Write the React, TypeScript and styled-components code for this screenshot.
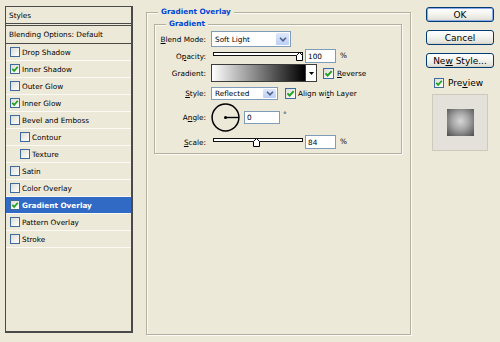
import React from "react";
import styled, { createGlobalStyle } from "styled-components";

const Global = createGlobalStyle`
  html, body { margin: 0; padding: 0; background: #ECE9D8; }
  body { font-family: "DejaVu Sans", Verdana, sans-serif; font-size: 7.3px; color: #000; }
  * { box-sizing: border-box; }
`;

const Dialog = styled.div`
  width: 500px;
  height: 342px;
  display: flex;
  align-items: flex-start;
  padding: 6px 0 0 5px;
  background: #ECE9D8;
  overflow: hidden;
`;

/* ---------- left styles list ---------- */
const StylesPanel = styled.div`
  width: 128px;
  height: 327px;
  border-style: solid;
  border-color: #4a4a4a;
  border-width: 1px 2px 2px 1px;
  display: flex;
  flex-direction: column;
  flex: none;
`;

const PanelHeader = styled.div`
  height: 17px;
  padding-left: 3px;
  display: flex;
  align-items: center;
  border-bottom: 1px solid #4a4a4a;
  margin-bottom: 1px;
`;

const BlendingRow = styled.div`
  height: 19px;
  padding-left: 3px;
  display: flex;
  align-items: center;
  border-top: 1px solid #4a4a4a;
  border-bottom: 1px solid #4a4a4a;
`;

const EffectRow = styled.div<{ $indent?: boolean; $selected?: boolean }>`
  height: 17px;
  display: flex;
  align-items: center;
  gap: 2px;
  padding-left: ${(p) => (p.$indent ? 14 : 4)}px;
  border-bottom: 1px solid #fbfaf4;
  background: ${(p) => (p.$selected ? "#316AC5" : "transparent")};
  color: ${(p) => (p.$selected ? "#fff" : "#000")};
  font-weight: ${(p) => (p.$selected ? "bold" : "normal")};
`;

/* ---------- checkbox ---------- */
const Box = styled.span<{ $size: number }>`
  width: ${(p) => p.$size}px;
  height: ${(p) => p.$size}px;
  border: 1px solid #3f6a9e;
  background: linear-gradient(135deg, #dcdcd4, #ffffff);
  display: inline-flex;
  align-items: center;
  justify-content: center;
  flex: none;
`;

const Check = ({ checked, size = 10 }: { checked?: boolean; size?: number }) => (
  <Box $size={size}>
    {checked && (
      <svg width={size - 2} height={size - 2} viewBox="0 0 8 8">
        <path d="M1.3 3.9 L3.2 5.9 L6.8 1.8" stroke="#21A121" strokeWidth="1.7" fill="none" />
      </svg>
    )}
  </Box>
);

/* ---------- group boxes ---------- */
const GroupBox = styled.div<{ $w: number; $h: number; $pl?: number; $mt?: number }>`
  width: ${(p) => p.$w}px;
  height: ${(p) => p.$h}px;
  margin-top: ${(p) => p.$mt ?? 0}px;
  border: 1px solid #b3b09f;
  box-shadow: inset 1px 1px 0 #fbfaf6, 1px 1px 0 #fbfaf6;
  padding-left: ${(p) => p.$pl ?? 0}px;
  flex: none;
`;

const GroupTitle = styled.div<{ $ml: number }>`
  width: fit-content;
  height: 10px;
  line-height: 10px;
  margin: -6px 0 0 ${(p) => p.$ml}px;
  padding: 0 3px;
  background: #ECE9D8;
  color: #0046D5;
  font-weight: bold;
`;

/* ---------- form rows ---------- */
const FormRow = styled.div<{ $h: number; $mt: number }>`
  display: flex;
  align-items: center;
  height: ${(p) => p.$h}px;
  margin-top: ${(p) => p.$mt}px;
`;

const Label = styled.span`
  width: 51px;
  margin-right: 5px;
  text-align: right;
  flex: none;
  white-space: nowrap;
`;

const U = styled.span`
  text-decoration: underline;
`;

const Select = styled.div<{ $w: number; $h: number }>`
  width: ${(p) => p.$w}px;
  height: ${(p) => p.$h}px;
  border: 1px solid #7F9DB9;
  background: #fff;
  padding: 1px;
  display: flex;
  flex: none;
`;

const SelectText = styled.span`
  flex: 1;
  display: flex;
  align-items: center;
  padding-left: 2px;
`;

const SelectArrow = styled.span`
  width: 13px;
  border-radius: 1px;
  background: linear-gradient(#dfe8fc, #bccff6);
  display: flex;
  align-items: center;
  justify-content: center;
`;

const Dropdown = ({ w, h, value }: { w: number; h: number; value: string }) => (
  <Select $w={w} $h={h}>
    <SelectText>{value}</SelectText>
    <SelectArrow>
      <svg width="8" height="5" viewBox="0 0 8 5">
        <path d="M1 0.8 L4 3.8 L7 0.8" stroke="#4D6185" strokeWidth="1.6" fill="none" />
      </svg>
    </SelectArrow>
  </Select>
);

const SliderWrap = styled.div`
  position: relative;
  width: 92px;
  height: 14px;
  padding: 3px 0 0 2px;
  flex: none;
`;

const Track = styled.div`
  width: 90px;
  height: 4px;
  border: 1px solid #111;
  border-top-width: 1px;
  background: #fff;
`;

const Thumb = styled.svg`
  position: absolute;
  top: 3px;
`;

const Slider = ({ x }: { x: number }) => (
  <SliderWrap>
    <Track />
    <Thumb width="7" height="9" viewBox="0 0 7 9" style={{ left: x }}>
      <polygon points="0.5,8.5 0.5,3.5 3.5,0.5 6.5,3.5 6.5,8.5" fill="#fff" stroke="#000" strokeWidth="1" />
    </Thumb>
  </SliderWrap>
);

const TextBox = styled.input<{ $w: number; $h: number; $ml: number }>`
  width: ${(p) => p.$w}px;
  height: ${(p) => p.$h}px;
  margin: 0 0 0 ${(p) => p.$ml}px;
  border: 1px solid #7F9DB9;
  background: #fff;
  padding: 0 0 0 2px;
  font: inherit;
  color: #000;
  outline: none;
  flex: none;
`;

const Unit = styled.span<{ $ml: number; $raise?: number }>`
  margin-left: ${(p) => p.$ml}px;
  margin-bottom: ${(p) => p.$raise ?? 2}px;
`;

const GradientBar = styled.div`
  width: 95px;
  height: 18px;
  border: 1px solid #3c3c3c;
  background: linear-gradient(to right, #ffffff, #000000);
  flex: none;
`;

const GradientArrow = styled.div`
  width: 11px;
  height: 18px;
  border: 1px solid #3c3c3c;
  border-left: none;
  background: #fff;
  display: flex;
  align-items: center;
  justify-content: center;
  flex: none;
`;

const CheckLabel = styled.span<{ $ml: number; $gap: number }>`
  display: flex;
  align-items: center;
  gap: ${(p) => p.$gap}px;
  margin-left: ${(p) => p.$ml}px;
`;

/* ---------- right column ---------- */
const RightColumn = styled.div`
  width: 68px;
  margin: 1px 0 0 15px;
  display: flex;
  flex-direction: column;
  font-size: 9px;
  flex: none;
`;

const Button = styled.button<{ $default?: boolean; $mt?: number }>`
  width: 68px;
  height: 15px;
  margin-top: ${(p) => p.$mt ?? 0}px;
  padding: 0;
  border: 1px solid #003C74;
  border-radius: 3px;
  background: linear-gradient(#ffffff, #f4f4f0 45%, #e5e4dc 85%, #d4cfc3);
  box-shadow: ${(p) => (p.$default ? "inset 0 0 0 1px #8eaae8" : "none")};
  font: inherit;
  line-height: 12px;
  color: #000;
`;

const PreviewRow = styled.div`
  display: flex;
  align-items: center;
  gap: 4px;
  height: 11px;
  margin-top: 9px;
  padding-left: 8px;
`;

const PreviewBox = styled.div`
  width: 56px;
  height: 57px;
  margin: 6px 0 0 6px;
  border: 1px solid #cdcabd;
  background: #e3e1d9;
  display: flex;
  align-items: center;
  justify-content: center;
`;

const PreviewSwatch = styled.div`
  width: 27px;
  height: 27px;
  background: radial-gradient(circle at 50% 45%, #d6d6d6 0%, #a8a8a8 40%, #6a6a6a 80%, #4a4a4a 100%);
`;

const effects: { label: string; checked?: boolean; indent?: boolean; selected?: boolean }[] = [
  { label: "Drop Shadow" },
  { label: "Inner Shadow", checked: true },
  { label: "Outer Glow" },
  { label: "Inner Glow", checked: true },
  { label: "Bevel and Emboss" },
  { label: "Contour", indent: true },
  { label: "Texture", indent: true },
  { label: "Satin" },
  { label: "Color Overlay" },
  { label: "Gradient Overlay", checked: true, selected: true },
  { label: "Pattern Overlay" },
  { label: "Stroke" },
];

export default function App() {
  return (
    <>
      <Global />
      <Dialog>
        <StylesPanel>
          <PanelHeader>Styles</PanelHeader>
          <BlendingRow>Blending Options: Default</BlendingRow>
          {effects.map((e) => (
            <EffectRow key={e.label} $indent={e.indent} $selected={e.selected}>
              <Check checked={e.checked} />
              <span>{e.label}</span>
            </EffectRow>
          ))}
        </StylesPanel>

        <GroupBox $w={265} $h={323} $pl={7} $mt={6} style={{ marginLeft: 13 }}>
          <GroupTitle $ml={4}>Gradient Overlay</GroupTitle>
          <GroupBox $w={248} $h={130} $mt={7}>
            <GroupTitle $ml={11}>Gradient</GroupTitle>

            <FormRow $h={16} $mt={2}>
              <Label>
                <U>B</U>lend Mode:
              </Label>
              <Dropdown w={80} h={16} value="Soft Light" />
            </FormRow>

            <FormRow $h={14} $mt={2}>
              <Label>
                O<U>p</U>acity:
              </Label>
              <Slider x={85} />
              <TextBox $w={31} $h={14} $ml={2} readOnly value="100" />
              <Unit $ml={4}>%</Unit>
            </FormRow>

            <FormRow $h={18} $mt={1}>
              <Label>Gradient:</Label>
              <GradientBar />
              <GradientArrow>
                <svg width="5" height="3" viewBox="0 0 5 3">
                  <polygon points="0,0 5,0 2.5,3" fill="#000" />
                </svg>
              </GradientArrow>
              <CheckLabel $ml={6} $gap={3}>
                <Check checked size={11} />
                <span>
                  <U>R</U>everse
                </span>
              </CheckLabel>
            </FormRow>

            <FormRow $h={13} $mt={5}>
              <Label>
                <U>S</U>tyle:
              </Label>
              <Dropdown w={67} h={13} value="Reflected" />
              <CheckLabel $ml={7} $gap={2}>
                <Check checked size={11} />
                <span>
                  Align wi<U>t</U>h Layer
                </span>
              </CheckLabel>
            </FormRow>

            <FormRow $h={30} $mt={2}>
              <Label>
                A<U>n</U>gle:
              </Label>
              <svg width="29" height="29" viewBox="0 0 29 29">
                <circle cx="14.5" cy="14.5" r="13.4" stroke="#000" strokeWidth="1.5" fill="none" />
                <line x1="14.5" y1="14.5" x2="28" y2="14.5" stroke="#000" strokeWidth="1.4" />
                <circle cx="14.5" cy="14.5" r="1.5" fill="#000" />
              </svg>
              <TextBox $w={36} $h={13} $ml={4} readOnly value="0" />
              <Unit $ml={3} $raise={6}>°</Unit>
            </FormRow>

            <FormRow $h={14} $mt={3}>
              <Label>
                <U>S</U>cale:
              </Label>
              <Slider x={42} />
              <TextBox $w={31} $h={14} $ml={2} readOnly value="84" />
              <Unit $ml={4}>%</Unit>
            </FormRow>
          </GroupBox>
        </GroupBox>

        <RightColumn>
          <Button $default>OK</Button>
          <Button $mt={8}>Cancel</Button>
          <Button $mt={8}>
            Ne<U>w</U> Style...
          </Button>
          <PreviewRow>
            <Check checked size={10} />
            <span>
              Pre<U>v</U>iew
            </span>
          </PreviewRow>
          <PreviewBox>
            <PreviewSwatch />
          </PreviewBox>
        </RightColumn>
      </Dialog>
    </>
  );
}
